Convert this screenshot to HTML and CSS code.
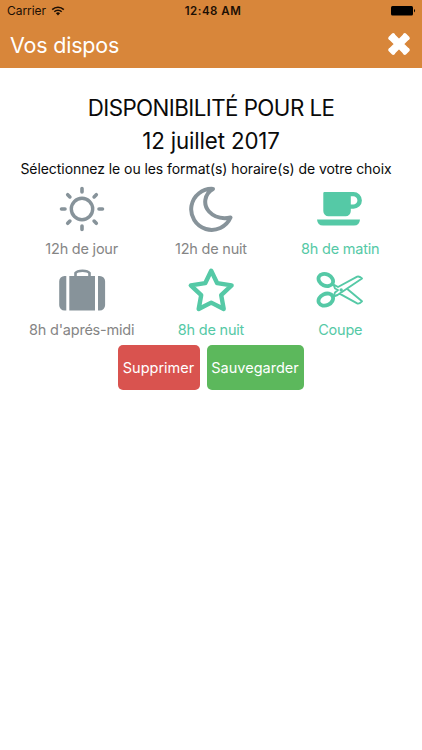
FILE: index.html
```html
<!DOCTYPE html>
<html lang="fr">

<head>
    <meta charset="UTF-8">
    <meta name="viewport" content="width=device-width, initial-scale=1.0">
    <title>Vos dispos</title>
    <link rel="stylesheet" href="styles.css">
</head>

<body>
    <header>
        <div class="status_bar">
            <div class="carrier">
                <span>Carrier</span>
                <svg width="14" height="10" viewBox="0 0 14 10">
                    <path d="M1.2 3.6a8.2 8.2 0 0 1 11.6 0M3.3 5.8a5.2 5.2 0 0 1 7.4 0" fill="none" stroke="#1c0f04" stroke-width="1.5" />
                    <path d="M4.9 7.3a3 3 0 0 1 4.2 0L7 9.6z" fill="#1c0f04" />
                </svg>
            </div>
            <span class="time">12:48 AM</span>
            <svg class="battery" width="25" height="10" viewBox="0 0 25 10">
                <rect width="22" height="9.5" rx="1.5" />
                <path d="M23 3q2.2 1.700 0 3.400z" />
            </svg>
        </div>
        <div class="title_bar">
            <h1>Vos dispos</h1>
            <svg width="24" height="24" viewBox="0 0 24 24">
                <path d="M4.500 4.500l15 15M19.500 4.500l-15 15" stroke="#fff" stroke-width="7.600" />
                <path d="M6.200 3.200L3.200 6.200M17.800 3.200L20.800 6.200M3.200 17.800L6.200 20.800M20.800 17.800L17.800 20.800" stroke="#fff" stroke-width="4" stroke-linecap="round" />
            </svg>
        </div>
    </header>

    <main>
        <h2>DISPONIBILITÉ POUR LE</h2>
        <h2 class="date">12 juillet 2017</h2>
        <p class="hint">Sélectionnez le ou les format(s) horaire(s) de votre choix</p>

        <div class="formats">
            <div class="format">
                <svg viewBox="0 0 48 48">
                    <g fill="none" stroke="currentColor" stroke-linecap="round">
                        <circle cx="24" cy="24" r="10.7" stroke-width="3.4" />
                        <path d="M24 3.500v3.500M24 41v3.500M3.500 24H7M41 24h3.500M9.700 9.700l2.200 2.200M36.100 36.100l2.200 2.200M38.300 9.700l-2.200 2.200M11.900 36.100l-2.200 2.200" stroke-width="3.600" />
                    </g>
                </svg>
                <span>12h de jour</span>
            </div>
            <div class="format">
                <svg viewBox="0 0 48 48">
                    <path d="M26 3.900C17 9 16 20 22 26.500S36 34 43.500 32.500A20.500 20.500 0 1 1 26 3.900z" fill="none" stroke="currentColor" stroke-width="4" stroke-linejoin="round" />
                </svg>
                <span>12h de nuit</span>
            </div>
            <div class="format selected">
                <svg viewBox="0 0 48 48">
                    <path fill-rule="evenodd" fill="currentColor" d="M8.500 7H37.500a8.400 8.400 0 0 1 0 16.800H34.800V26a5.200 5.200 0 0 1-5.200 5.200H12.500A5.200 5.200 0 0 1 7.300 26V8.200Q7.300 7 8.500 7zM34.800 11.200v8.400h2.400a4.200 4.200 0 0 0 0-8.400z" />
                    <path fill="currentColor" d="M1 34.500H44Q43.500 40.500 38 40.500H7Q1.500 40.500 1 34.500z" />
                </svg>
                <span>8h de matin</span>
            </div>
            <div class="format">
                <svg viewBox="0 0 48 48">
                    <path fill="currentColor" d="M8.300 10v34.500H6.500a5.300 5.300 0 0 1-5.300-5.300V15.300A5.300 5.300 0 0 1 6.500 10zM40 10v34.500h1.800a5.300 5.300 0 0 0 5.300-5.300V15.300A5.300 5.300 0 0 0 41.800 10zM11.300 10H37v34.500H11.300z" />
                    <path d="M17.500 11V7Q19 4.700 24.500 4.700T31.500 7V11" fill="none" stroke="currentColor" stroke-width="2.600" />
                </svg>
                <span>8h d'aprés-midi</span>
            </div>
            <div class="format selected">
                <svg viewBox="0 0 48 48">
                    <path d="M24.200 4.700L30.200 17.200L44.600 19.400L34.200 29.200L36.700 43L24.200 36.600L11.700 43L14.200 29.200L3.800 19.400L18.200 17.200z" fill="none" stroke="currentColor" stroke-width="4.400" stroke-linejoin="round" />
                </svg>
                <span>8h de nuit</span>
            </div>
            <div class="format selected">
                <svg viewBox="0 0 48 48">
                    <g fill="none" stroke="currentColor" stroke-linejoin="round">
                        <ellipse cx="9.800" cy="14" rx="7.600" ry="5.700" transform="rotate(25 9.800 14)" stroke-width="3.800" />
                        <ellipse cx="9.800" cy="33.600" rx="7.600" ry="5.700" transform="rotate(-25 9.800 33.600)" stroke-width="3.800" />
                        <path d="M17.500 18.500L22 21L41.200 10.700Q43 9.800 46 12.500L21.500 29L17.500 30.500M17.500 18.500L19 22.500L22 24L19 26.500L17.500 30.500M31 22.800L46 35.300Q43 38.300 41.200 37.400L23.500 27.700" stroke-width="1.900" />
                    </g>
                    <circle cx="25.200" cy="24" r="1.700" fill="currentColor" />
                </svg>
                <span>Coupe</span>
            </div>
        </div>

        <div class="actions">
            <button class="btn_delete">Supprimer</button>
            <button class="btn_save">Sauvegarder</button>
        </div>
    </main>
</body>

</html>
```
FILE: styles.css
```css
* {
    margin: 0;
    padding: 0;
    box-sizing: border-box;
}

body {
    background: white;
    color: #0a0a0a;
    font-family: Inter, "Liberation Sans", sans-serif;
}

header {
    height: 68px;
    background: #d8863a;
}

.status_bar {
    height: 22px;
    padding: 0 6px 0 7px;
    display: grid;
    grid-template-columns: 1fr auto 1fr;
    align-items: center;
    font-size: 12px;
    color: #1c0f04;
}

.carrier {
    display: flex;
    align-items: center;
    gap: 5px;
    margin-top: -1px;
    letter-spacing: -0.05px;
}

.time {
    padding-left: 3px;
    font-weight: 600;
    font-size: 11.5px;
    letter-spacing: 0.5px;
}

.battery {
    justify-self: end;
}

.title_bar {
    height: 46px;
    padding: 0 11px 0 10px;
    display: flex;
    justify-content: space-between;
    align-items: center;
}

.title_bar svg {
    margin-top: -2px;
}

h1 {
    margin-top: -1px;
    color: white;
    font-size: 21.5px;
    font-weight: 400;
    letter-spacing: -0.2px;
}

main {
    padding: 23px 17px 0;
    text-align: center;
}

h2 {
    font-size: 22.3px;
    font-weight: 400;
    line-height: 33px;
    letter-spacing: -0.55px;
}

h2.date {
    letter-spacing: -0.15px;
}

.hint {
    font-size: 14px;
    line-height: 22px;
    margin: 1px -10px 0;
    padding-right: 10px;
    letter-spacing: -0.07px;
    white-space: nowrap;
}

.formats {
    margin-top: 5px;
    display: grid;
    grid-template-columns: repeat(3, 129.3px);
    grid-auto-rows: 80.5px;
}

.format {
    display: flex;
    flex-direction: column;
    align-items: center;
    color: #87939a;
}

.format svg {
    width: 48px;
    height: 48px;
}

.format span {
    margin-top: 6px;
    font-size: 14.5px;
    line-height: 20px;
    letter-spacing: -0.22px;
    color: #858585;
}

.format.selected,
.format.selected span {
    color: #55c9a6;
}

.actions {
    margin-top: -1.5px;
    display: flex;
    justify-content: center;
    gap: 7px;
    padding-right: 1px;
}

button {
    height: 45px;
    border: none;
    border-radius: 5px;
    color: white;
    font-family: inherit;
    font-size: 14.5px;
}

.btn_delete {
    width: 82px;
    background: #d9534f;
}

.btn_save {
    width: 97px;
    background: #5cb85c;
}
```
